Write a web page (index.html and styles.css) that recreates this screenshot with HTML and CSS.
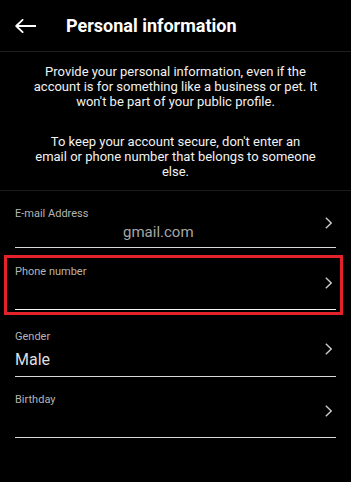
FILE: index.html
```html
<!DOCTYPE html>
<html lang="en">
<head>
<meta charset="utf-8">
<title>Personal information</title>
<link rel="stylesheet" href="styles.css">
</head>
<body>
<div class="screen">
  <header class="topbar">
    <svg class="back" width="21" height="14" viewBox="0 0 21 14" aria-hidden="true">
      <path d="M1.2 7 H21 M7.6 0.8 L1.2 7 L7.6 13.2" fill="none" stroke="#fff" stroke-width="1.8" stroke-linecap="round" stroke-linejoin="round"/>
    </svg>
    <h1 class="title">Personal information</h1>
  </header>

  <section class="intro">
    <p class="intro-text">Provide your personal information, even if the<br>account is for something like a business or pet. It<br>won't be part of your public profile.</p>
    <p class="intro-text intro-second">To keep your account secure, don't enter an<br>email or phone number that belongs to someone<br>else.</p>
  </section>

  <div class="fields">
    <div class="field field-email">
      <div class="field-text">
        <span class="label">E-mail Address</span>
        <span class="value value-email">gmail.com</span>
      </div>
      <svg class="chev" width="7" height="12" viewBox="0 0 7 12" aria-hidden="true"><path d="M0.8 0.8 L6.2 6 L0.8 11.2" fill="none" stroke="#cfcfcf" stroke-width="1.3"/></svg>
    </div>

    <div class="highlight">
      <div class="field field-phone">
        <div class="field-text">
          <span class="label">Phone number</span>
          <span class="value"></span>
        </div>
        <svg class="chev" width="7" height="12" viewBox="0 0 7 12" aria-hidden="true"><path d="M0.8 0.8 L6.2 6 L0.8 11.2" fill="none" stroke="#cfcfcf" stroke-width="1.3"/></svg>
      </div>
    </div>

    <div class="field field-gender">
      <div class="field-text">
        <span class="label">Gender</span>
        <span class="value value-gender">Male</span>
      </div>
      <svg class="chev" width="7" height="12" viewBox="0 0 7 12" aria-hidden="true"><path d="M0.8 0.8 L6.2 6 L0.8 11.2" fill="none" stroke="#cfcfcf" stroke-width="1.3"/></svg>
    </div>

    <div class="field field-birthday">
      <div class="field-text">
        <span class="label">Birthday</span>
        <span class="value"></span>
      </div>
      <svg class="chev" width="7" height="12" viewBox="0 0 7 12" aria-hidden="true"><path d="M0.8 0.8 L6.2 6 L0.8 11.2" fill="none" stroke="#cfcfcf" stroke-width="1.3"/></svg>
    </div>
  </div>
</div>
</body>
</html>
```

FILE: styles.css
```css
html, body {
  margin: 0;
  padding: 0;
  background: #000;
}

body {
  font-family: Roboto, "Liberation Sans", Arial, sans-serif;
  color: #fff;
}

.screen {
  width: 351px;
  min-height: 482px;
  background: #000;
}

.topbar {
  height: 51px;
  display: flex;
  align-items: center;
  padding-left: 15px;
  border-bottom: 1px solid #1f1f1f;
}

.back {
  display: block;
  flex: none;
}

.title {
  margin: 0 0 0 30px;
  font-size: 18px;
  font-weight: 700;
  line-height: 21px;
  color: #fff;
}

.intro {
  padding: 12px 10px 11px;
  border-bottom: 1px solid #1a1a1a;
}

.intro-text {
  margin: 0;
  font-size: 13px;
  line-height: 15px;
  text-align: center;
  color: #f2f2f2;
}

.intro-second {
  margin-top: 25px;
}

.fields {
  display: flex;
  flex-direction: column;
}

.field {
  display: flex;
  align-items: center;
  margin: 0 15px;
  border-bottom: 1px solid #d9d9d9;
}

.field-text {
  flex: 1;
  display: flex;
  flex-direction: column;
}

.label {
  font-size: 11px;
  line-height: 13px;
  color: #b4b4b4;
}

.value {
  min-height: 21px;
  margin-top: 5px;
  margin-bottom: 5px;
  font-size: 16px;
  line-height: 21px;
}

.value-email {
  margin-top: 2px;
  margin-bottom: 4px;
  padding-left: 108px;
  font-size: 15px;
  color: #a6a6a6;
}

.value-gender {
  margin-top: 6px;
  margin-bottom: 6px;
  color: #dedede;
}

.chev {
  display: block;
  flex: none;
  margin: 0 4px 8px 0;
}

.field-email {
  margin-top: 16px;
}

.highlight {
  margin: 7px 8px 0 4px;
  padding: 7px 4px 2px 8px;
  border: 3px solid #e4222b;
}

.field-phone {
  margin: 0;
  border-bottom-color: #f4f4f4;
}

.field-gender {
  margin-top: 15px;
}

.field-birthday {
  margin-top: 16px;
}
```
